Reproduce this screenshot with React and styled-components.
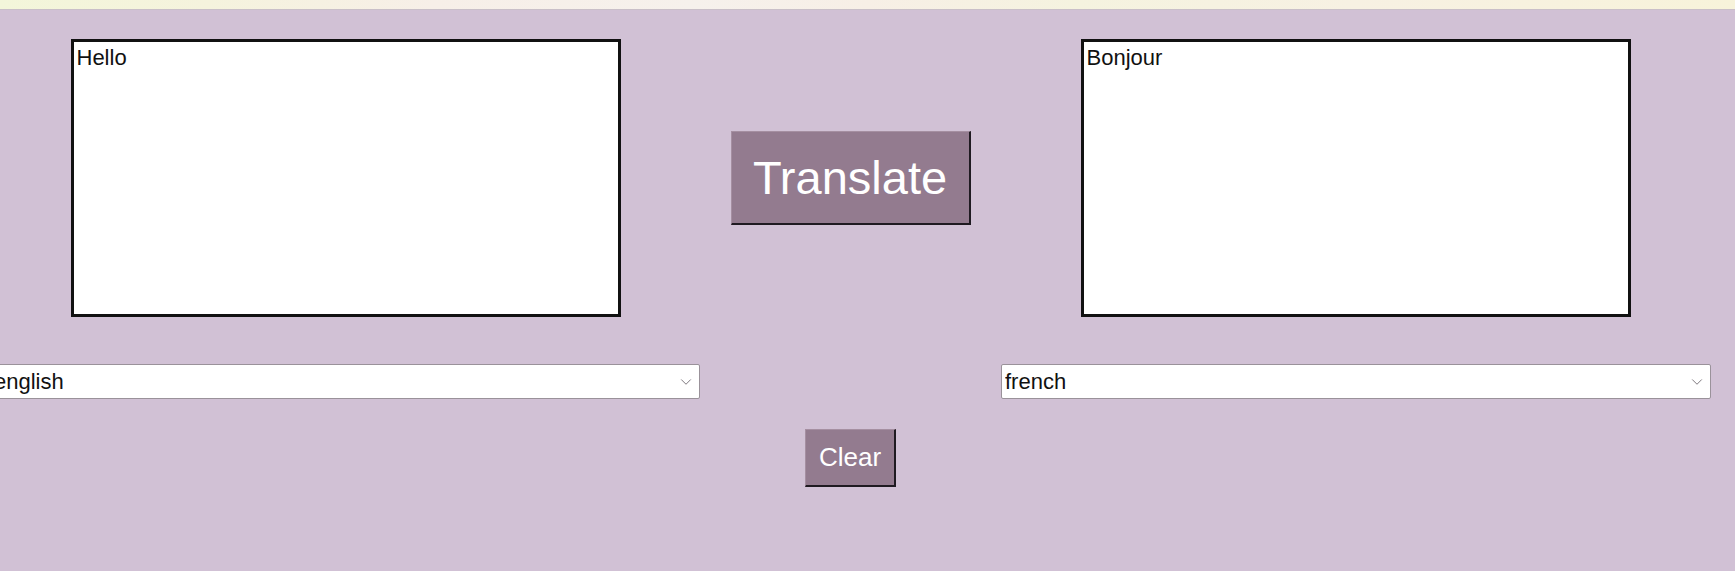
import React, { useState } from "react";
import styled, { createGlobalStyle } from "styled-components";
import { ChevronDown } from "lucide-react";

const GlobalStyle = createGlobalStyle`
    body {
        margin: 0;
        background: #d1c1d5;
        font-family: "Liberation Sans", Arial, sans-serif;
        overflow: hidden;
    }
`

const languages = ["english", "french", "spanish", "german", "italian"]

const LanguagePicker = ({ value, onChange }) => (
    <SelectWrap>
        <LangSelect value={value} onChange={onChange}>
            {languages.map(l => <option key={l} value={l}>{l}</option>)}
        </LangSelect>
        <Arrow size={18} strokeWidth={1.2} />
    </SelectWrap>
)

const App = () => {
    const [input, setInput] = useState("Hello")
    const [from, setFrom] = useState("english")
    const [to, setTo] = useState("french")

    return (<>
        <GlobalStyle />
        <TopStrip />
        <Page>
            <Wrapper>
                <TextRow>
                    <TextBox value={input} onChange={e => setInput(e.target.value)} />
                    <ActionButton $big>Translate</ActionButton>
                    <TextBox value="Bonjour" readOnly />
                </TextRow>

                <SelectRow>
                    <LanguagePicker value={from} onChange={e => setFrom(e.target.value)} />
                    <LanguagePicker value={to} onChange={e => setTo(e.target.value)} />
                </SelectRow>

                <ClearRow>
                    <ActionButton onClick={() => setInput("")}>Clear</ActionButton>
                </ClearRow>
            </Wrapper>
        </Page>
    </>)
}

export default App

const TopStrip = styled.div`
    height: 9px;
    background: linear-gradient(90deg, #f3f6da 0%, #f5f3dd 12%, #f7efe8 25%, #f6f1ec 40%, #f7efe6 50%, #f5f3df 62%, #f7f1e3 78%, #f7f3da 100%);
    border-bottom: 1px solid #c9bfc8;
`
const Page = styled.div`
    min-height: calc(100vh - 10px);
    background: #d1c1d5;
`
const Wrapper = styled.div`
    width: 1721px;
    margin-left: -10px;
    padding-top: 29px;
    display: flex;
    flex-direction: column;
    align-items: center;
`
const TextRow = styled.div`
    display: flex;
    align-items: center;
    justify-content: center;
    gap: 110px;
    width: 100%;
`
const TextBox = styled.textarea`
    box-sizing: border-box;
    width: 550px;
    height: 278px;
    border: 3px solid #111;
    padding: 3px 3px 0;
    background: #fff;
    color: #111;
    font-family: "Liberation Sans", Arial, sans-serif;
    font-size: 22px;
    line-height: 26px;
    resize: none;
    outline: none;
`
const ActionButton = styled.button`
    box-sizing: border-box;
    background: #937b8f;
    color: #fff;
    font-family: "Liberation Sans", Arial, sans-serif;
    font-size: ${p => (p.$big ? "47px" : "26px")};
    width: ${p => (p.$big ? "240px" : "91px")};
    height: ${p => (p.$big ? "94px" : "58px")};
    padding: 0;
    border-top: 1px solid #a58fa1;
    border-left: 1px solid #a58fa1;
    border-right: 2px solid #1f1a21;
    border-bottom: 2px solid #1f1a21;
    cursor: pointer;
`
const SelectRow = styled.div`
    display: flex;
    justify-content: space-between;
    width: 100%;
    margin-top: 47px;
`
const SelectWrap = styled.div`
    position: relative;
    width: 710px;
    height: 35px;
`
const LangSelect = styled.select`
    appearance: none;
    box-sizing: border-box;
    width: 100%;
    height: 100%;
    background: #fff;
    border: 1px solid #9a929a;
    border-radius: 2px;
    padding: 0 3px;
    color: #111;
    font-family: "Liberation Sans", Arial, sans-serif;
    font-size: 22px;
`
const Arrow = styled(ChevronDown)`
    position: absolute;
    right: 5px;
    top: 9px;
    color: #6f6a70;
    pointer-events: none;
`
const ClearRow = styled.div`
    display: flex;
    justify-content: center;
    width: 100%;
    margin-top: 30px;
`
